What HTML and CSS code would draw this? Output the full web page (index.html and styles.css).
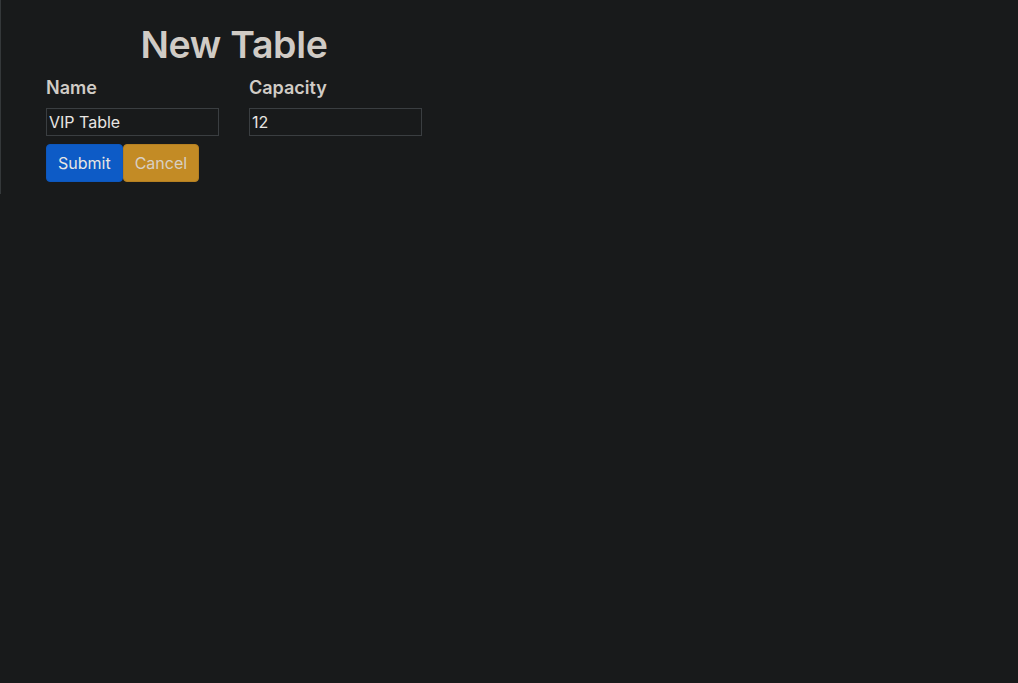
FILE: index.html
```html
<!DOCTYPE html>
<html>
<head>
<meta charset="utf-8">
<link rel="stylesheet" href="styles.css">
</head>
<body>
<div class="panel">
  <form class="form">
    <h1 class="title">New Table</h1>
    <div class="fields">
      <div class="field">
        <label class="label">Name</label>
        <input class="input" type="text" value="VIP Table">
      </div>
      <div class="field">
        <label class="label">Capacity</label>
        <input class="input" type="text" value="12">
      </div>
    </div>
    <div class="actions">
      <button type="button" class="btn btn-primary">Submit</button>
      <button type="button" class="btn btn-warning">Cancel</button>
    </div>
  </form>
</div>
</body>
</html>
```
FILE: styles.css
```css
html, body {
  margin: 0;
  padding: 0;
  background: #181a1b;
  height: 100%;
}
body {
  font-family: Inter, "Liberation Sans", sans-serif;
  color: #d0ccc6;
}
.panel {
  display: inline-block;
  border-left: 1px solid #34383a;
  padding: 22px 40px 12px 45px;
}
.form {
  display: flex;
  flex-direction: column;
  width: 376px;
}
.title {
  margin: 0;
  font-size: 37.5px;
  line-height: 46px;
  font-weight: 600;
  text-align: center;
  color: #d0cbc5;
  letter-spacing: -0.3px;
}
.fields {
  display: flex;
  gap: 30px;
  margin-top: 6px;
}
.field {
  display: flex;
  flex-direction: column;
}
.label {
  font-size: 18px;
  font-weight: 600;
  line-height: 28px;
  margin-bottom: 6px;
}
.input {
  box-sizing: border-box;
  width: 173px;
  height: 28px;
  background: #181a1b;
  border: 1px solid #3a3e41;
  color: #e8e6e3;
  font-family: Inter, "Liberation Sans", sans-serif;
  font-size: 16px;
  padding: 1px 2px;
  outline: none;
}
.actions {
  display: flex;
  margin-top: 8px;
}
.btn {
  box-sizing: border-box;
  height: 38px;
  padding: 0 11px;
  border: 1px solid transparent;
  border-radius: 4px;
  font-family: Inter, "Liberation Sans", sans-serif;
  font-size: 16px;
  line-height: 24px;
}
.btn-primary {
  background: #0d5bc6;
  border-color: #0d57bd;
  color: #e8e6e3;
}
.btn-warning {
  background: #c38b25;
  border-color: #b58022;
  color: #d8d0c3;
}
```
